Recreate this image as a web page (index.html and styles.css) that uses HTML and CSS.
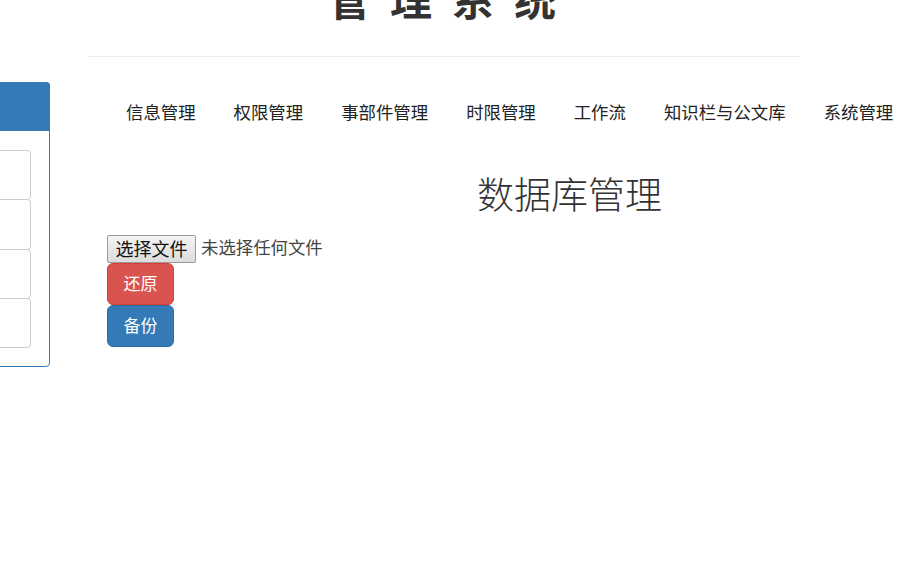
FILE: index.html
```html
<!DOCTYPE html>
<html lang="zh-CN">
<head>
<meta charset="utf-8">
<title>数据库管理</title>
<link rel="stylesheet" href="styles.css">
</head>
<body>
<div class="page">
  <header class="banner"><span class="banner-title">管理系统</span></header>
  <div class="layout">
    <aside class="panel">
      <div class="panel-heading"></div>
      <ul class="panel-list">
        <li class="panel-item"></li>
        <li class="panel-item"></li>
        <li class="panel-item"></li>
        <li class="panel-item"></li>
      </ul>
    </aside>
    <main class="content">
      <nav class="nav">
        <a class="nav-item">信息管理</a>
        <a class="nav-item">权限管理</a>
        <a class="nav-item">事部件管理</a>
        <a class="nav-item">时限管理</a>
        <a class="nav-item">工作流</a>
        <a class="nav-item">知识栏与公文库</a>
        <a class="nav-item">系统管理</a>
      </nav>
      <h1 class="title">数据库管理</h1>
      <div class="file-row">
        <button class="file-button" type="button">选择文件</button>
        <span class="file-label">未选择任何文件</span>
      </div>
      <button class="btn btn-danger" type="button">还原</button>
      <button class="btn btn-primary" type="button">备份</button>
    </main>
  </div>
</div>
</body>
</html>
```

FILE: styles.css
```css
* { box-sizing: border-box; }
html, body { margin: 0; padding: 0; background: #fff; }
body {
  font-family: "Noto Sans CJK SC", "Liberation Sans", sans-serif;
  color: #333;
}
.page {
  width: 920px;
  height: 572px;
  overflow: hidden;
}
.banner {
  display: flex;
  align-items: flex-end;
  height: 57px;
  margin-left: 88px;
  width: 712px;
  padding-left: 240px;
  padding-bottom: 37px;
  border-bottom: 1px solid #eee;
}
.banner-title {
  font-size: 42px;
  line-height: 42px;
  font-weight: 700;
  letter-spacing: 20px;
  white-space: nowrap;
  color: #333;
}
.layout { display: flex; align-items: flex-start; }
.panel {
  flex: none;
  width: 200px;
  height: 285px;
  margin-top: 25px;
  margin-left: -150px;
  border: 1px solid #337ab7;
  border-radius: 4px;
}
.panel-heading {
  height: 49px;
  margin: -1px -1px 0;
  background: #337ab7;
  border-radius: 4px 4px 0 0;
}
.panel-list {
  list-style: none;
  margin: 0;
  padding: 19px 18px 0 15px;
}
.panel-item {
  height: 50.33px;
  margin-bottom: -1px;
  background: #fff;
  border: 1px solid #ccc;
  border-radius: 4px;
}
.content {
  flex: none;
  width: 925px;
  margin-left: 57px;
}
.nav {
  display: flex;
  margin-top: 43px;
  white-space: nowrap;
}
.nav-item {
  padding: 0 19px;
  font-size: 17.4px;
  line-height: 24px;
  color: #222;
}
.title {
  margin: 42px 0 0;
  height: 69px;
  font-size: 37px;
  line-height: 54px;
  font-weight: 300;
  text-align: center;
  color: #333;
}
.file-row {
  display: flex;
  align-items: center;
  height: 28px;
}
.file-button {
  width: 89px;
  height: 28px;
  padding: 0 0 2px;
  font: inherit;
  font-size: 18px;
  line-height: 24px;
  color: #111;
  background: linear-gradient(#f4f4f4, #dcdcdc);
  border: 1px solid #9a9a9a;
  border-radius: 2px;
}
.file-label {
  margin-left: 5px;
  padding-bottom: 4px;
  font-size: 17.4px;
  line-height: 24px;
  color: #444;
}
.btn {
  display: block;
  width: 67px;
  height: 42px;
  padding: 0 0 2px;
  font: inherit;
  font-size: 17px;
  line-height: 24px;
  color: #fff;
  border: 1px solid transparent;
  border-radius: 6px;
}
.btn-danger { background: #d9534f; border-color: #d43f3a; }
.btn-primary { background: #337ab7; border-color: #2e6da4; }
```
